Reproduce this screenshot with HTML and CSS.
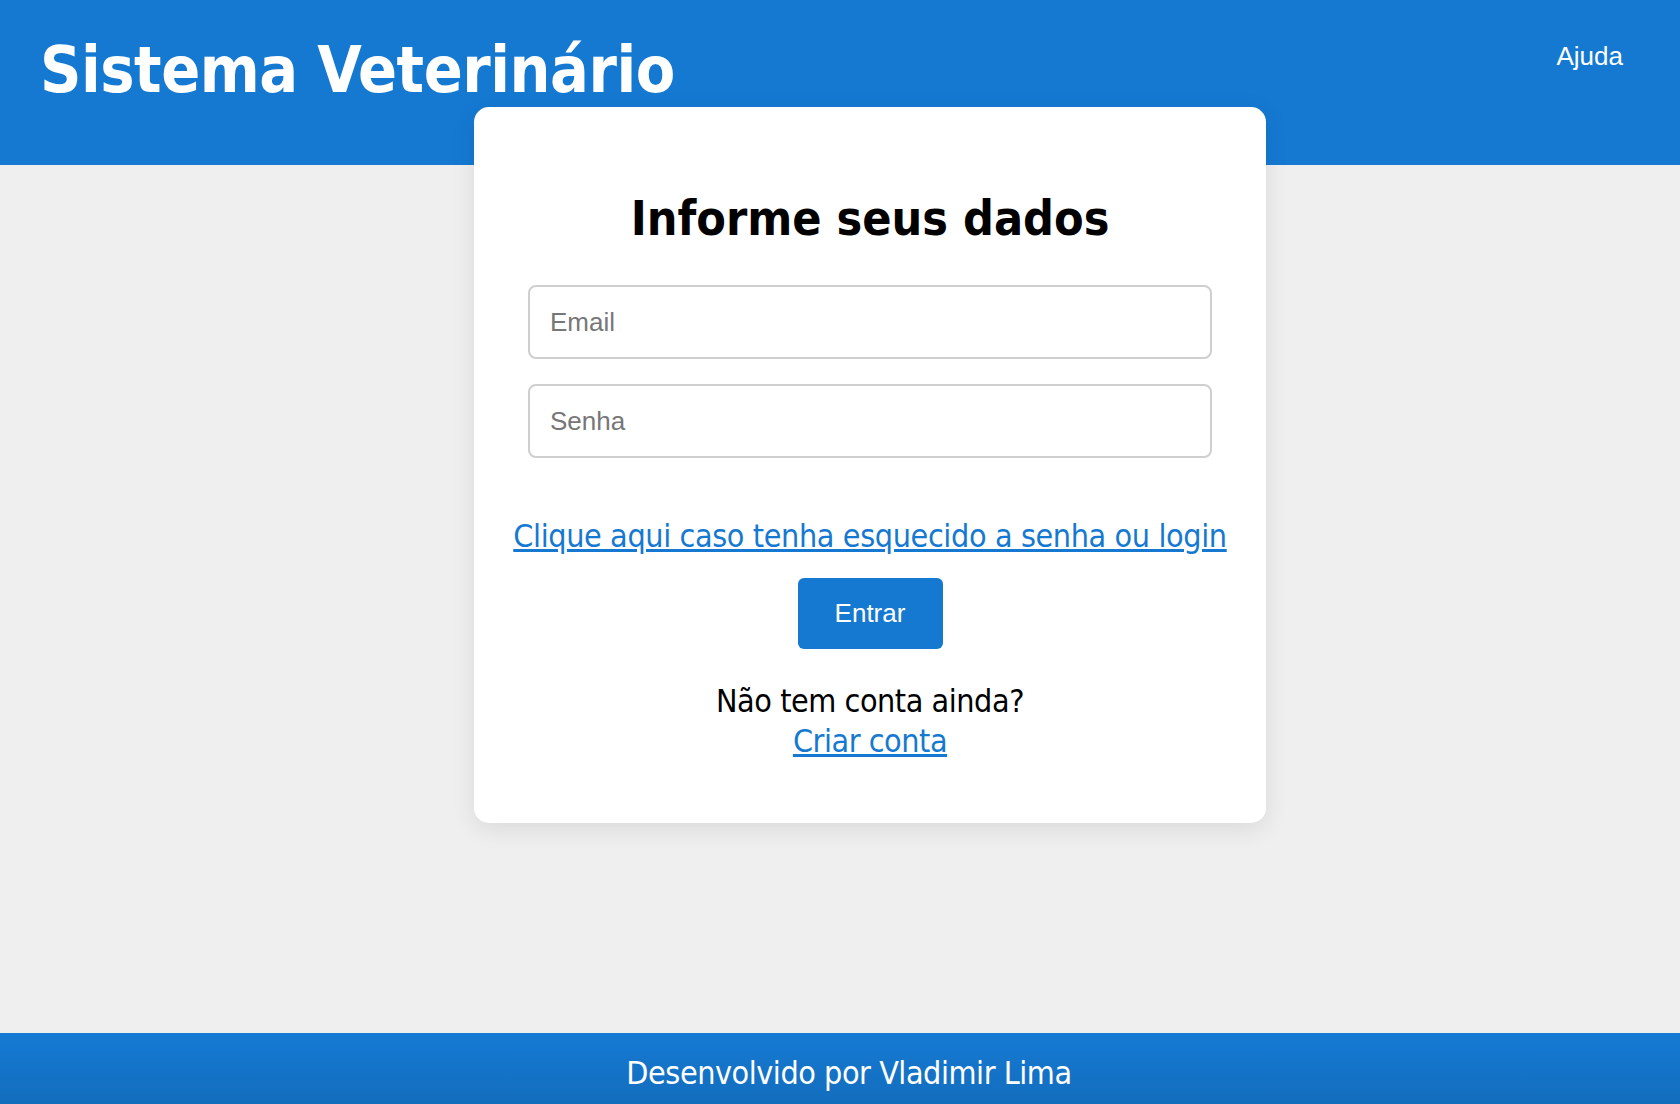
FILE: index.html
```html
<!DOCTYPE html>
<html lang="pt-BR">
<head>
<meta charset="utf-8">
<title>Sistema Veterinário</title>
<link rel="stylesheet" href="styles.css">
</head>
<body>
<header class="topbar">
  <h1 class="brand">Sistema Veterinário</h1>
  <a class="help" href="#">Ajuda</a>
</header>
<main class="main">
  <section class="card">
    <h2 class="card-title">Informe seus dados</h2>
    <form class="form">
      <input class="field" type="email" placeholder="Email">
      <input class="field" type="password" placeholder="Senha">
    </form>
    <a class="forgot" href="#">Clique aqui caso tenha esquecido a senha ou login</a>
    <button class="btn" type="button">Entrar</button>
    <p class="signup">Não tem conta ainda?<br><a class="signup-link" href="#">Criar conta</a></p>
  </section>
</main>
<footer class="footer">Desenvolvido por Vladimir Lima</footer>
</body>
</html>
```

FILE: styles.css
```css
* { box-sizing: border-box; }
html, body { margin: 0; padding: 0; }
body {
  min-height: 100vh;
  display: flex;
  flex-direction: column;
  background: #efefef;
  font-family: Tahoma, "DejaVu Sans Condensed", "DejaVu Sans", sans-serif;
  color: #000;
}
.topbar {
  height: 165px;
  background: #1579d2;
  display: flex;
  justify-content: space-between;
  align-items: flex-start;
  padding: 38px 57px 0 40px;
}
.brand {
  margin: 0;
  font-size: 64px;
  line-height: 64px;
  font-weight: bold;
  color: #fff;
  letter-spacing: -0.45px;
}
.help {
  margin-top: 5px;
  font-family: "Liberation Sans", Arial, sans-serif;
  font-size: 26px;
  line-height: 26px;
  color: #fff;
  text-decoration: none;
}
.main {
  flex: 1;
  display: flex;
  flex-direction: column;
}
.card {
  width: 792px;
  margin: -58px 0 0 calc(50% - 366px);
  background: #fff;
  border-radius: 15px;
  box-shadow: 0 6px 24px rgba(0, 0, 0, 0.09);
  padding: 87px 54px 62px;
  display: flex;
  flex-direction: column;
  align-items: center;
}
.card-title {
  margin: 0;
  font-size: 48px;
  line-height: 48px;
  font-weight: bold;
  letter-spacing: 0;
}
.form {
  width: 100%;
  margin-top: 43px;
  display: flex;
  flex-direction: column;
  gap: 25px;
}
.field {
  width: 100%;
  height: 74px;
  border: 2px solid #cfcfcf;
  border-radius: 8px;
  padding: 0 20px;
  font-family: "Liberation Sans", Arial, sans-serif;
  font-size: 26px;
  color: #333;
  background: #fff;
  outline: none;
}
.field::placeholder { color: #777; }
.forgot {
  margin-top: 58px;
  font-size: 32px;
  line-height: 40px;
  color: #1579d2;
  letter-spacing: -0.38px;
  white-space: nowrap;
}
.btn {
  margin-top: 22px;
  width: 145px;
  height: 71px;
  border: none;
  border-radius: 6px;
  background: #1579d2;
  color: #fff;
  font-family: "Liberation Sans", Arial, sans-serif;
  font-size: 26px;
  cursor: pointer;
}
.signup {
  margin: 32px 0 0;
  font-size: 32px;
  line-height: 40px;
  text-align: center;
  letter-spacing: -0.45px;
}
.signup-link { color: #1579d2; }
.footer {
  height: 71px;
  padding: 10px 0 0 18px;
  background: linear-gradient(#157ad4, #136dbd);
  color: #fff;
  font-size: 32px;
  line-height: 61px;
  text-align: center;
  letter-spacing: -0.45px;
}
```
